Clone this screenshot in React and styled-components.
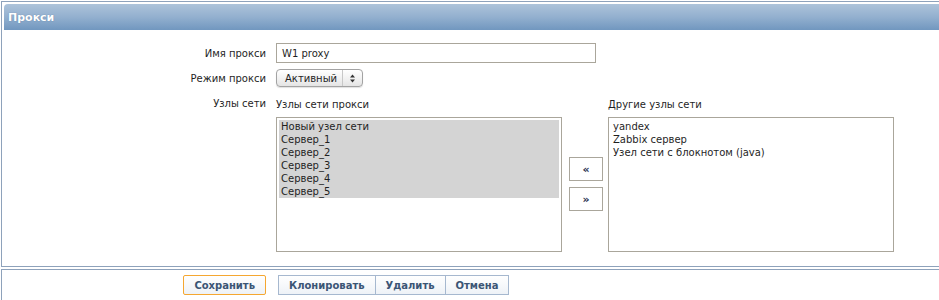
import React from "react";
import styled, { createGlobalStyle } from "styled-components";

const GlobalStyle = createGlobalStyle`
	body {
		margin: 0;
		background: #ffffff;
		overflow: hidden;
		font-family: "DejaVu Sans", Verdana, sans-serif;
		font-size: 10px;
		color: #1f1f1f;
	}
`

const proxyHosts = ["Новый узел сети", "Сервер_1", "Сервер_2", "Сервер_3", "Сервер_4", "Сервер_5"];
const otherHosts = ["yandex", "Zabbix сервер", "Узел сети с блокнотом (java)"];

const SelectArrows = () => (
	<svg width="7" height="9" viewBox="0 0 7 9">
		<path d="M3.5 0.5 L6 3.5 L1 3.5 Z" fill="#333" />
		<path d="M3.5 8.5 L6 5.5 L1 5.5 Z" fill="#333" />
	</svg>
);

const App = () => {
	return (
		<Page>
			<GlobalStyle />
			<Frame>
				<Header>Прокси</Header>
				<Form>
					<Label>Имя прокси</Label>
					<TextInput>W1 proxy</TextInput>

					<Label>Режим прокси</Label>
					<SelectBox>
						<SelectText>Активный</SelectText>
						<SelectArrow><SelectArrows /></SelectArrow>
					</SelectBox>

					<Label top>Узлы сети</Label>
					<Twin>
						<Column>
							<Caption>Узлы сети прокси</Caption>
							<ListBox>
								{proxyHosts.map((h) => (
									<Option key={h} selected>{h}</Option>
								))}
							</ListBox>
						</Column>
						<Arrows>
							<MoveBtn>«</MoveBtn>
							<MoveBtn>»</MoveBtn>
						</Arrows>
						<Column>
							<Caption>Другие узлы сети</Caption>
							<ListBox>
								{otherHosts.map((h) => (
									<Option key={h}>{h}</Option>
								))}
							</ListBox>
						</Column>
					</Twin>
				</Form>
			</Frame>
			<Footer>
				<SaveCell>
					<FootBtn main>Сохранить</FootBtn>
				</SaveCell>
				<BtnGroup>
					<FootBtn>Клонировать</FootBtn>
					<FootBtn>Удалить</FootBtn>
					<FootBtn>Отмена</FootBtn>
				</BtnGroup>
			</Footer>
		</Page>
	);
}

const Page = styled.div`
	width: 980px;
	padding: 1px 0 0 1px;
`
const Frame = styled.div`
	border: 1px solid #8ea2bb;
	padding: 2px 2px 14px 2px;
`
const Header = styled.div`
	height: 26px;
	box-sizing: border-box;
	padding: 0 4px;
	display: flex;
	align-items: center;
	border-radius: 4px 4px 0 0;
	background: linear-gradient(to bottom, #adc3da 0%, #93b0cf 50%, #7197bf 100%);
	color: #ffffff;
	font-weight: bold;
	font-size: 11px;
	text-shadow: 0 0 1px rgba(40, 70, 110, 0.5);
`
const Form = styled.div`
	display: grid;
	grid-template-columns: 262px 1fr;
	column-gap: 10px;
	row-gap: 6px;
	padding-top: 13px;
	align-items: center;
`
const Label = styled.div`
	text-align: right;
	align-self: ${(p) => (p.top ? "start" : "center")};
	margin-top: ${(p) => (p.top ? "5px" : "0")};
`
const TextInput = styled.div`
	width: 320px;
	height: 20px;
	box-sizing: border-box;
	border: 1px solid #aaa69b;
	padding: 0 5px;
	display: flex;
	align-items: center;
`
const SelectBox = styled.div`
	width: 87px;
	height: 18px;
	box-sizing: border-box;
	border: 1px solid #a3a3a3;
	border-radius: 4px;
	background: linear-gradient(to bottom, #ffffff, #f0f0f0 60%, #e4e4e4);
	box-shadow: 0 1px 1px rgba(0, 0, 0, 0.12);
	display: flex;
	align-items: center;
`
const SelectText = styled.div`
	flex: 1;
	padding-left: 8px;
`
const SelectArrow = styled.div`
	width: 19px;
	height: 100%;
	border-left: 1px solid #c8c8c8;
	display: flex;
	align-items: center;
	justify-content: center;
`
const Twin = styled.div`
	display: flex;
	align-items: flex-start;
	margin-top: 5px;
`
const Column = styled.div`
	display: flex;
	flex-direction: column;
`
const Caption = styled.div`
	height: 13px;
	line-height: 13px;
	margin-bottom: 6px;
`
const ListBox = styled.div`
	width: 286px;
	height: 135px;
	box-sizing: border-box;
	border: 1px solid #aaa69b;
	padding: 2px;
`
const Option = styled.div`
	height: 13px;
	line-height: 13px;
	padding-left: 2px;
	background: ${(p) => (p.selected ? "#d4d4d4" : "transparent")};
	white-space: nowrap;
`
const Arrows = styled.div`
	display: flex;
	flex-direction: column;
	gap: 6px;
	margin: 59px 5px 0 7px;
`
const MoveBtn = styled.div`
	width: 34px;
	height: 24px;
	box-sizing: border-box;
	border: 1px solid #aaa69b;
	background: #ffffff;
	display: flex;
	align-items: center;
	justify-content: center;
	color: #1d2d4c;
	font-weight: bold;
	font-size: 11px;
`
const Footer = styled.div`
	margin-top: 2px;
	border: 1px solid #8ea2bb;
	height: 32px;
	box-sizing: border-box;
	display: grid;
	grid-template-columns: 264px 1fr;
	column-gap: 12px;
	align-items: center;
`
const SaveCell = styled.div`
	display: flex;
	justify-content: flex-end;
`
const BtnGroup = styled.div`
	display: flex;
	& > div + div {
		border-left: none;
	}
`
const FootBtn = styled.div`
	height: 20px;
	box-sizing: border-box;
	padding: 0 10px;
	border: 1px solid ${(p) => (p.main ? "#f5a731" : "#a6b8cf")};
	border-radius: ${(p) => (p.main ? "2px" : "0")};
	background: linear-gradient(to bottom, #ffffff, #eef2f7);
	display: flex;
	align-items: center;
	color: #3b5575;
	font-weight: bold;
	font-size: 10px;
	white-space: nowrap;
`

export default App;
